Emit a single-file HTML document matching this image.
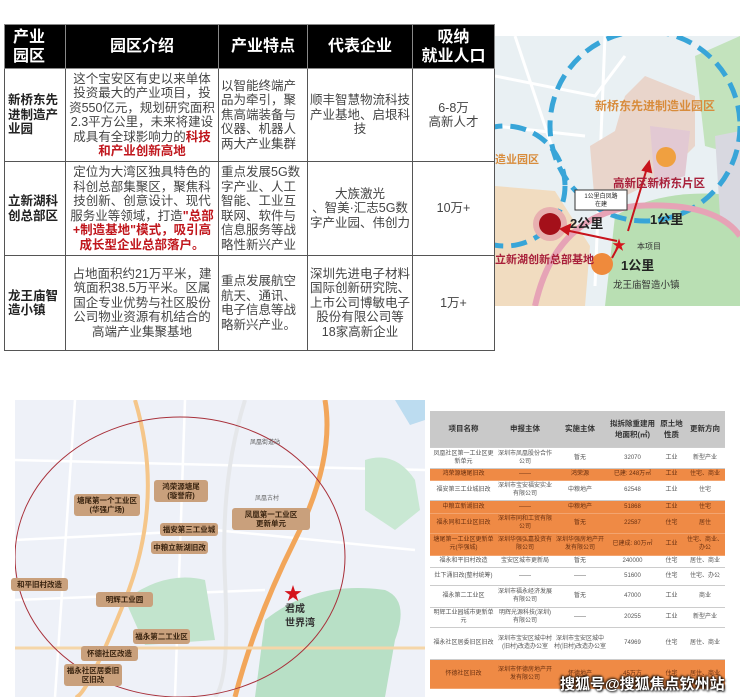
<!DOCTYPE html>
<html><head><meta charset="utf-8"><style>
*{margin:0;padding:0;box-sizing:border-box}
body{width:740px;height:700px;background:#fff;position:relative;overflow:hidden;font-family:"Liberation Sans","Noto Sans CJK SC",sans-serif;color:#333}
.abs{position:absolute}
table{border-collapse:collapse;position:absolute}
#t1{left:4px;top:24px;width:491px;font-size:12.5px;line-height:14.5px}
#t1 td,#t1 th{border:1px solid #555;text-align:center;vertical-align:middle;padding:0 2px}
#t1 th{background:#000;color:#fff;font-size:16px;line-height:19px;font-weight:bold;height:44px;border-color:#888}
#t1 td.n{font-weight:bold;color:#222;text-align:left;padding-left:3px}
#t1 td{color:#444}
.r{color:#c0161c;font-weight:bold}
#t2{left:430px;top:411px;width:295px;font-size:6px;line-height:8px;color:#555}
#t2 td{text-align:center;border-bottom:1px solid #ccc;padding:0 1px}
#t2 tr.h td{background:#c9c9c9;font-weight:bold;font-size:7.5px;line-height:11px;height:36px;color:#333}
#t2 tr.o td{background:#ef8a45;color:#6a3010;border-bottom:1px solid #f3a46f}
.lbl{position:absolute;background:#c9a07c;color:#3a2410;font-size:7.5px;font-weight:bold;text-align:center;line-height:9px;border-radius:3px;display:flex;align-items:center;justify-content:center}
</style></head><body>

<table id="t1">
<tr><th style="width:61px;text-align:left;padding-left:8px">产业<br>园区</th><th style="width:153px">园区介绍</th><th style="width:89px">产业特点</th><th style="width:105px">代表企业</th><th>吸纳<br>就业人口</th></tr>
<tr style="height:93px"><td class="n">新桥东先<br>进制造产<br>业园</td><td>这个宝安区有史以来单体投资最大的产业项目，投资550亿元，规划研究面积2.3平方公里，未来将建设成具有全球影响力的<span class="r">科技和产业创新高地</span></td><td style="text-align:left">以智能终端产品为牵引，聚焦高端装备与仪器、机器人两大产业集群</td><td>顺丰智慧物流科技产业基地、启垠科技</td><td>6-8万<br>高新人才</td></tr>
<tr style="height:94px"><td class="n">立新湖科<br>创总部区</td><td>定位为大湾区独具特色的科创总部集聚区，聚焦科技创新、创意设计、现代服务业等领域，打造<span class="r">"总部+制造基地"模式，吸引高成长型企业总部落户。</span></td><td style="text-align:left">重点发展5G数字产业、人工智能、工业互联网、软件与信息服务等战略性新兴产业</td><td>大族激光<br>、智美·汇志5G数字产业园、伟创力</td><td>10万+</td></tr>
<tr style="height:95px"><td class="n">龙王庙智<br>造小镇</td><td>占地面积约21万平米，建筑面积38.5万平米。区属国企专业优势与社区股份公司物业资源有机结合的高端产业集聚基地</td><td style="text-align:left">重点发展航空航天、通讯、电子信息等战略新兴产业。</td><td>深圳先进电子材料国际创新研究院、上市公司博敏电子股份有限公司等18家高新企业</td><td>1万+</td></tr>
</table>

<svg class="abs" style="left:495px;top:36px" width="245" height="270" viewBox="0 0 245 270">
<rect width="245" height="270" fill="#e9f0f3"/>
<g stroke="#fff" stroke-width="3" fill="none">
<path d="M0 40 L100 60 L130 20"/><path d="M20 0 L60 120"/><path d="M0 90 L90 100"/><path d="M110 0 L100 250"/>
</g>
<path d="M0 150 L60 155 L95 210 L90 270 L0 270Z" fill="#f1dcc0"/>
<path d="M95 110 L120 95 L130 60 L150 40 L200 60 L200 110 L170 140 L130 160 L100 170Z" fill="#e9d5cb"/>
<path d="M155 90 L195 95 L190 140 L160 150Z" fill="#e2c9d3"/>
<path d="M120 180 Q170 150 245 160 L245 270 L110 270 Z" fill="#b9dfb3"/>
<path d="M200 20 L245 0 L245 120 L210 110Z" fill="#c3e3bd"/>
<path d="M220 100 L245 95 L245 200 L225 180Z" fill="#d8d8e0"/>
<circle cx="150" cy="90" r="95" fill="none" stroke="#38a5d8" stroke-width="5" stroke-dasharray="16 8"/>
<circle cx="10" cy="150" r="60" fill="none" stroke="#38a5d8" stroke-width="5" stroke-dasharray="16 8"/>
<path d="M40 270 Q60 180 140 170 Q220 165 245 200" fill="none" stroke="#e6a3b6" stroke-width="6"/>
<circle cx="55" cy="188" r="17" fill="#e8b0b0"/><circle cx="55" cy="188" r="11" fill="#a4101a"/>
<circle cx="171" cy="121" r="10" fill="#f0a040"/><circle cx="107" cy="228" r="11" fill="#ef8a3c"/>
<g stroke="#c8141c" stroke-width="2" fill="#c8141c">
<line x1="122" y1="205" x2="70" y2="194"/><polygon points="66,193 75,189 73,198"/>
<line x1="133" y1="195" x2="152" y2="132"/><polygon points="154,126 156,136 148,134"/>
<line x1="124" y1="209" x2="117" y2="222"/>
</g>
<text x="124" y="214" font-size="14" fill="#d4141c" text-anchor="middle">★</text>
<rect x="80" y="154" width="52" height="20" fill="#fff" stroke="#333" stroke-width="1"/>
<text x="106" y="162" font-size="6" text-anchor="middle" fill="#222">1公里白凤路</text><text x="106" y="170" font-size="6" text-anchor="middle" fill="#222">在建</text>
<g font-family="Liberation Sans,Noto Sans CJK SC,sans-serif" font-weight="bold">
<text x="100" y="74" font-size="12" fill="#d88c3c">新桥东先进制造业园区</text>
<text x="118" y="151" font-size="11.5" fill="#a8203a">高新区新桥东片区</text>
<text x="0" y="127" font-size="11" fill="#d88c3c">造业园区</text>
<text x="0" y="227" font-size="11" fill="#a8203a">立新湖创新总部基地</text>
<text x="75" y="192" font-size="13" fill="#222">2公里</text>
<text x="155" y="188" font-size="13" fill="#222">1公里</text>
<text x="126" y="234" font-size="13" fill="#222">1公里</text>
</g>
<text x="142" y="213" font-size="8" fill="#333">本项目</text>
<text x="118" y="252" font-size="9.5" fill="#333">龙王庙智造小镇</text>
</svg>

<svg class="abs" style="left:15px;top:400px" width="410" height="297" viewBox="0 0 410 297">
<rect width="410" height="297" fill="#eef1f8"/>
<g stroke="#fff" stroke-width="2.5" fill="none">
<path d="M0 60 L410 70"/><path d="M0 140 L200 130 L400 150"/><path d="M60 0 L40 297"/><path d="M170 0 L160 297"/><path d="M0 200 L250 190"/>
</g>
<path d="M350 60 Q380 50 400 80 L405 110 L380 130 L350 110Z" fill="#c9e8d3"/>
<path d="M250 220 Q300 180 370 190 Q395 200 380 240 L370 297 L240 297Z" fill="#b8e0c6"/>
<path d="M110 200 Q150 170 190 180 L200 240 L130 245Z" fill="#c2e4cd"/>
<path d="M380 0 L410 0 L410 20 L395 25Z" fill="#bcdcf0"/>
<path d="M120 0 Q150 100 110 200 T60 297" fill="none" stroke="#f5c68a" stroke-width="4"/>
<path d="M230 0 Q205 80 210 180 T200 297" fill="none" stroke="#e5e7ea" stroke-width="4"/>
<path d="M310 0 Q320 60 280 140 T220 297" fill="none" stroke="#f2a65a" stroke-width="5"/>
<path d="M0 248 L410 248" stroke="#f5d6a8" stroke-width="3"/>
<ellipse cx="165" cy="157" rx="165" ry="140" fill="none" stroke="#a8303a" stroke-width="1"/>
<text x="278" y="200" font-size="18" fill="#d4141c" text-anchor="middle">★</text>
<text x="270" y="212" font-size="10" font-weight="bold" fill="#333">君成</text>
<text x="270" y="226" font-size="10" font-weight="bold" fill="#333">世界湾</text>
<text x="240" y="100" font-size="6" fill="#666">凤凰古村</text>
<text x="235" y="44" font-size="6" fill="#555">凤凰街道站</text>
</svg>
<div class="lbl" style="left:154px;top:480px;width:54px;height:22px">鸿荣源塘尾<br>(璇誉府)</div>
<div class="lbl" style="left:74px;top:494px;width:66px;height:22px">塘尾第一个工业区<br>(华强广场)</div>
<div class="lbl" style="left:232px;top:508px;width:78px;height:22px">凤凰第一工业区<br>更新单元</div>
<div class="lbl" style="left:160px;top:523px;width:58px;height:13px">福安第三工业城</div>
<div class="lbl" style="left:151px;top:541px;width:57px;height:13px">中粮立新湖旧改</div>
<div class="lbl" style="left:11px;top:578px;width:57px;height:13px">和平旧村改造</div>
<div class="lbl" style="left:96px;top:592px;width:57px;height:15px">明辉工业园</div>
<div class="lbl" style="left:133px;top:629px;width:57px;height:15px">福永第二工业区</div>
<div class="lbl" style="left:81px;top:646px;width:57px;height:15px">怀德社区改造</div>
<div class="lbl" style="left:64px;top:664px;width:58px;height:22px">福永社区居委旧<br>区旧改</div>

<table id="t2">
<tr class="h"><td style="width:67px">项目名称</td><td style="width:56px">申报主体</td><td style="width:54px">实施主体</td><td style="width:51px">拟拆除重建用<br>地面积(㎡)</td><td style="width:27px">原土地<br>性质</td><td>更新方向</td></tr>
<tr style="height:21px"><td>凤凰社区第一工业区更新单元</td><td>深圳市凤凰股份合作公司</td><td>暂无</td><td>32070</td><td>工业</td><td>新型产业</td></tr>
<tr class="o" style="height:12px"><td>鸿荣源塘尾旧改</td><td>——</td><td>鸿荣源</td><td>已建: 248万㎡</td><td>工业</td><td>住宅、商业</td></tr>
<tr style="height:20px"><td>福安第三工业城旧改</td><td>深圳市宝安福安实业有限公司</td><td>中粮地产</td><td>62548</td><td>工业</td><td>住宅</td></tr>
<tr class="o" style="height:13px"><td>中粮立新湖旧改</td><td>——</td><td>中粮地产</td><td>51868</td><td>工业</td><td>住宅</td></tr>
<tr class="o" style="height:20px"><td>福永同和工业区旧改</td><td>深圳市同和工贸有限公司</td><td>暂无</td><td>22587</td><td>住宅</td><td>居住</td></tr>
<tr class="o" style="height:22px"><td>塘尾第一工业区更新单元(华强城)</td><td>深圳华强弘嘉投资有限公司</td><td>深圳华强房地产开发有限公司</td><td>已建成: 80万㎡</td><td>工业</td><td>住宅、商业、办公</td></tr>
<tr style="height:12px"><td>福永和平旧村改造</td><td>宝安区城市更新局</td><td>暂无</td><td>240000</td><td>住宅</td><td>居住、商业</td></tr>
<tr style="height:18px"><td>灶下涌旧改(整村统筹)</td><td>——</td><td>——</td><td>51600</td><td>住宅</td><td>住宅、办公</td></tr>
<tr style="height:22px"><td>福永第二工业区</td><td>深圳市福永经济发展有限公司</td><td>暂无</td><td>47000</td><td>工业</td><td>商业</td></tr>
<tr style="height:20px"><td>明辉工业园城市更新单元</td><td>明辉光源科技(深圳)有限公司</td><td>——</td><td>20255</td><td>工业</td><td>新型产业</td></tr>
<tr style="height:32px"><td>福永社区居委旧区旧改</td><td>深圳市宝安区城中村(旧村)改造办公室</td><td>深圳市宝安区城中村(旧村)改造办公室</td><td>74969</td><td>住宅</td><td>居住、商业</td></tr>
<tr class="o" style="height:29px"><td>怀德社区旧改</td><td>深圳市怀德房地产开发有限公司</td><td>怀德地产</td><td>45万方</td><td>住宅</td><td>居住、商业</td></tr>
</table>

<div class="abs" style="left:560px;top:673px;font-size:15px;font-weight:bold;color:#fff;text-shadow:0 0 2px #000,1px 1px 2px #000,-1px -1px 2px #000">搜狐号@搜狐焦点钦州站</div>
</body></html>
